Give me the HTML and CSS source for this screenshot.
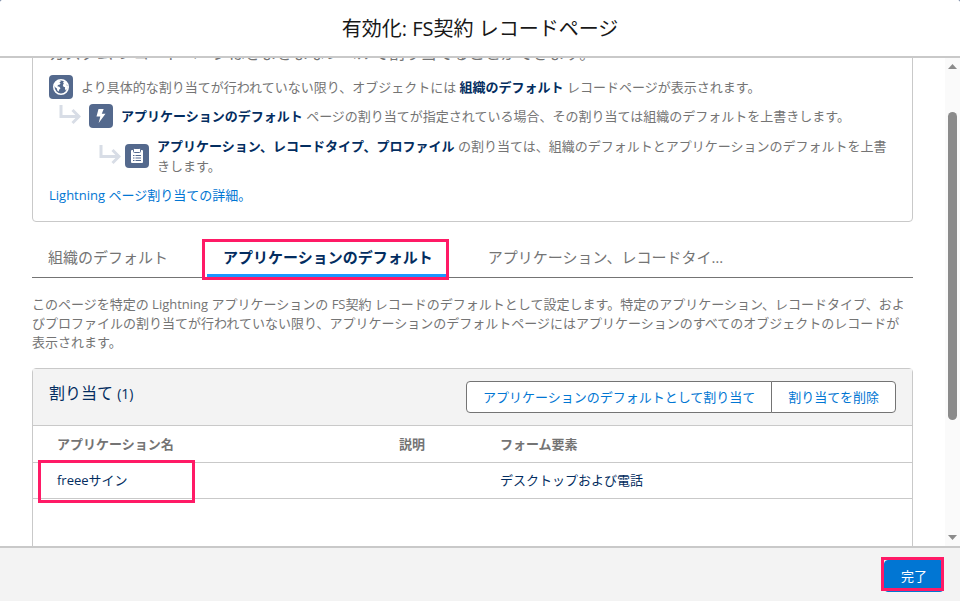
FILE: index.html
```html
<!DOCTYPE html>
<html lang="ja">
<head>
<meta charset="UTF-8" />
<meta name="viewport" content="width=device-width, initial-scale=1" />
<title>有効化: FS契約 レコードページ</title>
<link rel="stylesheet" href="styles.css">
</head>
<body>
<div class="modal" role="dialog" aria-labelledby="modalTitle">
  <header class="modal-header">
    <h1 id="modalTitle">有効化: FS契約 レコードページ</h1>
  </header>

  <div class="modal-body">
    <main class="content">
      <section class="info-box">
        <p class="lead">カスタム レコードページはさまざまなレベルで割り当てることができます。</p>

        <div class="level">
          <svg class="icon" viewBox="0 0 24 24" aria-hidden="true">
            <circle cx="12" cy="12" r="7.200" fill="none" stroke="#fff" stroke-width="1.600" />
            <path fill="#fff" d="M6 8 8.500 5.500l2.500-.3.800 1.300-1.600 1.200 1.300.3-.6 1.500-1.800.6-.8 1.200 2 .4 1.200 1.500-1.400 1.500-.4 1.800-1.400-1-.4-2-2-1.500-1.100-2zM14 7l2-1 1.800 1.700.9 1.800-1.500.3 1.400 1.400.6.3-1 2.600-1.500 1.400-.8-1.700.2-1.600-1.600-.4-.7-1.700 1-1.300z" />
          </svg>
          <p>より具体的な割り当てが行われていない限り、オブジェクトには <strong>組織のデフォルト</strong> レコードページが表示されます。</p>
        </div>

        <div class="level level-2">
          <svg class="arrow" viewBox="0 0 22 22" aria-hidden="true"><path d="M2 0v11.500h18M13.500 5 20 11.500 13.500 18" /></svg>
          <svg class="icon" viewBox="0 0 24 24" aria-hidden="true">
            <path fill="#fff" d="M9.500 5h5.200l-1.900 4.800h3.700L9.700 19l1.600-6.600H7.500z" />
          </svg>
          <p><strong>アプリケーションのデフォルト</strong> ページの割り当てが指定されている場合、その割り当ては組織のデフォルトを上書きします。</p>
        </div>

        <div class="level level-3">
          <svg class="arrow" viewBox="0 0 22 22" aria-hidden="true"><path d="M2 0v11.500h18M13.500 5 20 11.500 13.500 18" /></svg>
          <svg class="icon" viewBox="0 0 24 24" aria-hidden="true">
            <rect x="6" y="6" width="12" height="13" rx="1" fill="#fff" />
            <rect x="8.500" y="4.500" width="7" height="4" rx="1" fill="#fff" stroke="#54698d" />
            <path stroke="#54698d" d="M8 11.500h1.500M10.500 11.500H16M8 14h1.500M10.500 14H16M8 16.500h1.500M10.500 16.500H16" />
          </svg>
          <p><strong>アプリケーション、レコードタイプ、プロファイル</strong> の割り当ては、組織のデフォルトとアプリケーションのデフォルトを上書きします。</p>
        </div>

        <a class="link" href="#">Lightning ページ割り当ての詳細。</a>
      </section>

      <div class="tabs" role="tablist">
        <button type="button" class="tab" role="tab" aria-selected="false">組織のデフォルト</button>
        <button type="button" class="tab active mark mark-tab" role="tab" aria-selected="true">アプリケーションのデフォルト</button>
        <button type="button" class="tab" role="tab" aria-selected="false"><span>アプリケーション、レコードタイプ、プロファイル</span></button>
      </div>

      <p class="description">このページを特定の Lightning アプリケーションの FS契約 レコードのデフォルトとして設定します。特定のアプリケーション、レコードタイプ、およびプロファイルの割り当てが行われていない限り、アプリケーションのデフォルトページにはアプリケーションのすべてのオブジェクトのレコードが表示されます。</p>

      <section class="card">
        <div class="card-header">
          <h2>割り当て <span>(1)</span></h2>
          <div class="button-group">
            <button type="button">アプリケーションのデフォルトとして割り当て</button>
            <button type="button">割り当てを削除</button>
          </div>
        </div>
        <table>
          <thead>
            <tr>
              <th class="col-app" scope="col">アプリケーション名</th>
              <th class="col-desc" scope="col">説明</th>
              <th scope="col">フォーム要素</th>
            </tr>
          </thead>
          <tbody>
            <tr>
              <td><span class="mark mark-cell">freeeサイン</span></td>
              <td></td>
              <td>デスクトップおよび電話</td>
            </tr>
          </tbody>
        </table>
      </section>
    </main>

    <div class="scrollbar" aria-hidden="true">
      <svg viewBox="0 0 9 5"><path d="M0 5 4.500 0 9 5z" /></svg>
      <div class="track"><div class="thumb"></div></div>
      <svg viewBox="0 0 9 5"><path d="M0 0h9L4.500 5z" /></svg>
    </div>
  </div>

  <footer class="modal-footer">
    <button type="button" class="done mark mark-done">完了</button>
  </footer>
</div>
</body>
</html>
```
FILE: styles.css
```css
:root {
  --text: #747474;
  --dark: #032d60;
  --link: #0176d3;
  --border: #c9c9c9;
  --gray-bg: #f3f3f3;
  --icon-bg: #54698d;
  --mark: #ff1a66;
}
* {
  box-sizing: border-box;
}
body {
  margin: 0;
  background: var(--icon-bg);
  color: var(--text);
  font-family: "Open Sans", "Noto Sans CJK JP", sans-serif;
  font-size: 13px;
  line-height: 20px;
}
h1, h2, p {
  margin: 0;
  font-weight: 400;
}
button {
  font: inherit;
  cursor: pointer;
}
strong {
  color: var(--dark);
  font-weight: 700;
}
.modal {
  height: 100vh;
  display: flex;
  flex-direction: column;
  background: white;
  border-radius: 2px 2px 0 0;
}
.modal-header {
  padding: 15px 16px 13px;
  border-bottom: 2px solid var(--border);
  text-align: center;
}
.modal-header h1 {
  color: #181818;
  font-size: 20px;
  line-height: 28px;
}
.modal-body {
  flex: 1;
  min-height: 0;
  display: flex;
  overflow: hidden;
}
.content {
  flex: 1;
  min-width: 0;
  padding: 0 32px;
  margin-top: -32px;
}

/* assignment levels */
.info-box {
  padding: 16px;
  border: 1px solid var(--border);
  border-radius: 4px;
}
.lead {
  margin-bottom: 12px;
  font-size: 16px;
  line-height: 20px;
}
.level {
  display: flex;
  align-items: center;
  gap: 8px;
  margin-bottom: 5px;
}
.level-2 {
  padding-left: 10px;
  margin-bottom: 8px;
}
.level-3 {
  padding-left: 50px;
  margin-bottom: 9px;
}
.level-3 .arrow {
  margin-right: -4px;
}
.icon {
  flex: none;
  width: 24px;
  height: 24px;
  background: var(--icon-bg);
  border-radius: 4px;
}
.arrow {
  flex: none;
  width: 22px;
  height: 22px;
  fill: none;
  stroke: #d8dde6;
  stroke-width: 3;
}
.link {
  display: block;
  color: var(--link);
  text-decoration: none;
}

/* tabs */
.tabs {
  display: flex;
  gap: 23px;
  margin-top: 16px;
  border-bottom: 1px solid #747474;
}
.tab {
  padding: 0 16px;
  border: 0;
  background: none;
  color: var(--text);
  font-size: 15px;
  line-height: 39px;
}
.tab span {
  display: block;
  max-width: 240px;
  overflow: hidden;
  text-overflow: ellipsis;
  white-space: nowrap;
}
.tab.active {
  color: var(--dark);
  font-weight: 700;
  box-shadow: inset 0 -3px #1b96ff;
}
.description {
  margin: 17px 0 16px;
  padding-right: 4px;
  line-height: 19px;
}

/* assignment card */
.card {
  height: 240px;
  border: 1px solid var(--border);
  border-radius: 4px;
}
.card-header {
  display: flex;
  justify-content: space-between;
  padding: 12px 16px;
  background: var(--gray-bg);
  border-bottom: 1px solid var(--border);
}
.card-header h2 {
  color: var(--dark);
  font-size: 16px;
  line-height: 24px;
}
.card-header h2 span {
  font-size: 14px;
}
.button-group {
  display: flex;
}
.button-group button {
  padding: 0 16px;
  border: 1px solid #747474;
  border-radius: 4px 0 0 4px;
  background: white;
  color: var(--link);
  line-height: 30px;
}
.button-group button + button {
  margin-left: -1px;
  border-radius: 0 4px 4px 0;
}
table {
  width: 100%;
  border-collapse: collapse;
  table-layout: fixed;
}
th, td {
  height: 36px;
  padding: 0 8px;
  border-bottom: 1px solid var(--border);
  text-align: left;
}
th:first-child, td:first-child {
  padding-left: 24px;
}
td {
  color: var(--dark);
}
.col-app {
  width: 358px;
}
.col-desc {
  width: 101px;
}

/* scrollbar */
.scrollbar {
  width: 15px;
  display: flex;
  flex-direction: column;
  align-items: center;
  padding: 6px 0;
  background: #fafafa;
}
.scrollbar svg {
  width: 9px;
  height: 5px;
  fill: #8b8b8b;
}
.track {
  flex: 1;
  padding: 43px 0;
}
.thumb {
  width: 9px;
  height: 81%;
  border-radius: 5px;
  background: #8b8b8b;
}

/* footer */
.modal-footer {
  display: flex;
  justify-content: flex-end;
  padding: 12px 16px 9px;
  border-top: 2px solid var(--border);
  background: var(--gray-bg);
}
.done {
  padding: 0 16px;
  border: 1px solid var(--link);
  border-radius: 4px;
  background: var(--link);
  color: white;
  line-height: 30px;
}

/* highlight frames */
.mark {
  position: relative;
}
.mark::after {
  content: "";
  position: absolute;
  border: 3px solid var(--mark);
}
.mark-tab::after {
  inset: 1px 0 -3px -5px;
}
.mark-cell::after {
  inset: -11px -67px -14px -19px;
}
.mark-done::after {
  inset: -4px -1px 0 -4px;
}
```
